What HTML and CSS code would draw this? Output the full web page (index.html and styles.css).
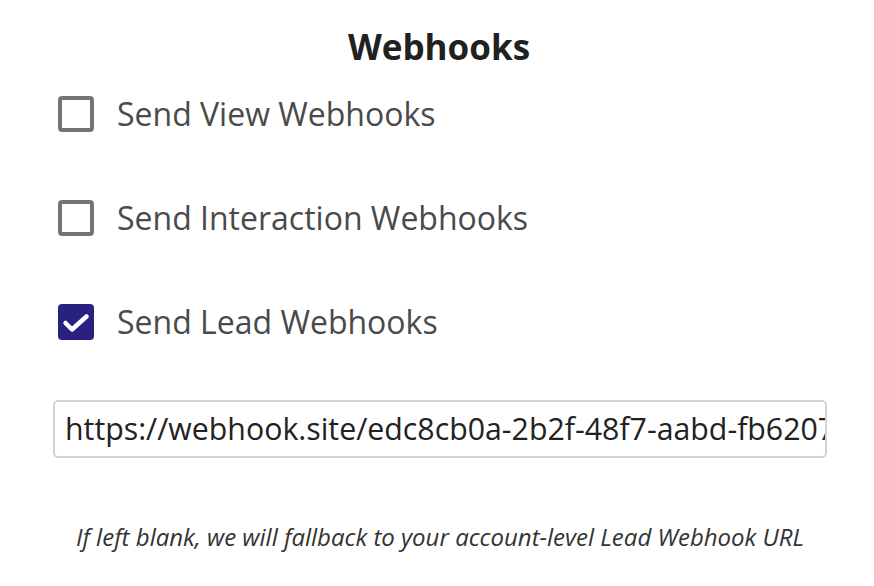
FILE: index.html
```html
<!DOCTYPE html>
<html>
<head>
<meta charset="utf-8">
<link rel="stylesheet" href="styles.css">
</head>
<body>
<div class="panel">
  <h2 class="title">Webhooks</h2>
  <div class="options">
    <label class="option"><span class="box"></span><span class="label">Send View Webhooks</span></label>
    <label class="option"><span class="box"></span><span class="label">Send Interaction Webhooks</span></label>
    <label class="option"><span class="box checked"><svg viewBox="0 0 36 36" width="36" height="36"><path d="M7.5 19 L14 25.5 L28.5 12.5" fill="none" stroke="#fff" stroke-width="4.5" stroke-linecap="round" stroke-linejoin="round"/></svg></span><span class="label">Send Lead Webhooks</span></label>
  </div>
  <div class="field">https://webhook.site/edc8cb0a-2b2f-48f7-aabd-fb6207</div>
  <p class="note">If left blank, we will fallback to your account-level Lead Webhook URL</p>
</div>
</body>
</html>
```

FILE: styles.css
```css
html, body {
  margin: 0;
  padding: 0;
  background: #fff;
}
body {
  font-family: "Open Sans", "Liberation Sans", sans-serif;
}
.panel {
  width: 874px;
  padding: 26px 0 0 0;
  box-sizing: border-box;
}
.title {
  margin: 0;
  text-align: center;
  font-size: 35px;
  font-weight: 700;
  color: #212121;
  line-height: 42px;
  padding-left: 4px;
}
.options {
  display: flex;
  flex-direction: column;
  gap: 68px;
  padding-left: 58px;
  margin-top: 28px;
}
.option {
  display: flex;
  align-items: center;
  gap: 23px;
  height: 36px;
}
.box {
  width: 36px;
  height: 36px;
  box-sizing: border-box;
  border: 4px solid #757575;
  border-radius: 4px;
  flex: none;
  display: block;
}
.box.checked {
  border: none;
  background: #28217f;
}
.box svg { display: block; }
.label {
  font-size: 32px;
  color: #4a4a4a;
  line-height: 36px;
}
.field {
  margin: 60px 0 0 53px;
  width: 774px;
  height: 58px;
  box-sizing: border-box;
  border: 2px solid #d3d3d3;
  border-radius: 5px;
  padding: 0 0 0 10px;
  font-size: 30.3px;
  line-height: 54px;
  color: #222;
  white-space: nowrap;
  overflow: hidden;
}
.note {
  margin: 63px 0 0 0;
  text-align: center;
  font-style: italic;
  font-size: 24px;
  color: #333;
  line-height: 32px;
  padding-left: 6px;
}
```
